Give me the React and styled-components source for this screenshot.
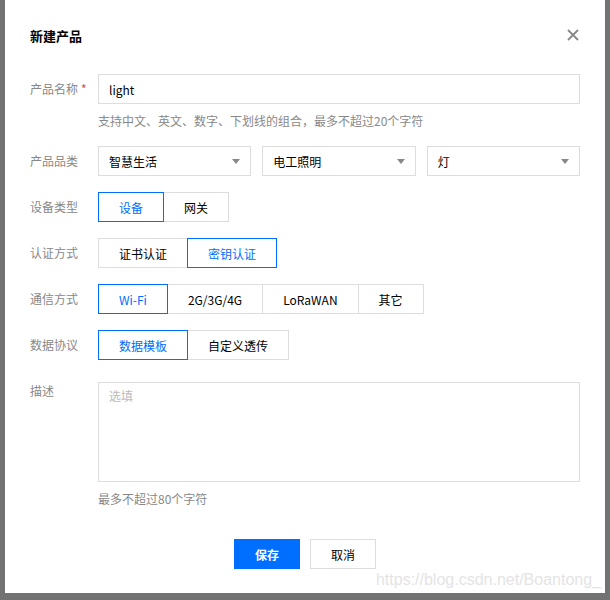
import { useState } from "react";
import styled, { createGlobalStyle } from "styled-components";

const GlobalStyle = createGlobalStyle`
  body {
    margin: 0;
    font-family: "Noto Sans CJK SC", "Liberation Sans", sans-serif;
  }
`;

const SegmentGroup = ({ options, value, onChange }) => (
  <Segments>
    {options.map((opt) => (
      <SegmentButton
        key={opt}
        $active={opt === value}
        onClick={() => onChange(opt)}
      >
        {opt}
      </SegmentButton>
    ))}
  </Segments>
);

const Select = ({ value }) => (
  <SelectBox>
    <span>{value}</span>
    <svg width="8" height="5" viewBox="0 0 8 5">
      <path d="M0 0 L8 0 L4 5 Z" fill="#888" />
    </svg>
  </SelectBox>
);

const App = () => {
  const [deviceType, setDeviceType] = useState("设备");
  const [auth, setAuth] = useState("密钥认证");
  const [network, setNetwork] = useState("Wi-Fi");
  const [protocol, setProtocol] = useState("数据模板");

  return (
    <>
      <GlobalStyle />
      <Backdrop>
        <Modal>
          <Header>
            <Title>新建产品</Title>
            <CloseButton>
              <svg width="12" height="12" viewBox="0 0 12 12">
                <path
                  d="M1 1 L11 11 M11 1 L1 11"
                  stroke="#888"
                  strokeWidth="1.8"
                />
              </svg>
            </CloseButton>
          </Header>

          <FormRow>
            <Label>
              产品名称<Required>*</Required>
            </Label>
            <div>
              <TextInput defaultValue="light" />
              <Help>支持中文、英文、数字、下划线的组合，最多不超过20个字符</Help>
            </div>
          </FormRow>

          <FormRow>
            <Label>产品品类</Label>
            <SelectRow>
              <Select value="智慧生活" />
              <Select value="电工照明" />
              <Select value="灯" />
            </SelectRow>
          </FormRow>

          <FormRow>
            <Label>设备类型</Label>
            <SegmentGroup
              options={["设备", "网关"]}
              value={deviceType}
              onChange={setDeviceType}
            />
          </FormRow>

          <FormRow>
            <Label>认证方式</Label>
            <SegmentGroup
              options={["证书认证", "密钥认证"]}
              value={auth}
              onChange={setAuth}
            />
          </FormRow>

          <FormRow>
            <Label>通信方式</Label>
            <SegmentGroup
              options={["Wi-Fi", "2G/3G/4G", "LoRaWAN", "其它"]}
              value={network}
              onChange={setNetwork}
            />
          </FormRow>

          <FormRow>
            <Label>数据协议</Label>
            <SegmentGroup
              options={["数据模板", "自定义透传"]}
              value={protocol}
              onChange={setProtocol}
            />
          </FormRow>

          <FormRow $top={22}>
            <Label $lineHeight={18}>描述</Label>
            <div>
              <TextArea placeholder="选填" />
              <Help>最多不超过80个字符</Help>
            </div>
          </FormRow>

          <Footer>
            <PrimaryButton>保存</PrimaryButton>
            <DefaultButton>取消</DefaultButton>
          </Footer>

          <Watermark>https://blog.csdn.net/Boantong_</Watermark>
        </Modal>
      </Backdrop>
    </>
  );
};

const Backdrop = styled.div`
  width: 610px;
  height: 600px;
  padding: 0 5px 7px;
  box-sizing: border-box;
  background-color: #727272;
`;

const Modal = styled.div`
  position: relative;
  height: 593px;
  background-color: #fff;
  padding: 26px 25px 0 25px;
  box-sizing: border-box;
  font-size: 12px;
  color: #000;
`;

const Header = styled.div`
  display: flex;
  justify-content: space-between;
  align-items: center;
  height: 18px;
  margin-bottom: 30px;
`;

const Title = styled.h3`
  margin: 0;
  font-size: 13px;
  font-weight: 700;
  color: #000;
`;

const CloseButton = styled.button`
  display: flex;
  align-items: center;
  border: none;
  background: none;
  padding: 0;
  margin-right: 1px;
  cursor: pointer;
`;

const FormRow = styled.div`
  display: grid;
  grid-template-columns: 68px 1fr;
  align-items: start;
  margin-top: ${(p) => p.$top ?? 16}px;

  &:first-of-type {
    margin-top: 0;
  }
`;

const Label = styled.label`
  line-height: ${(p) => p.$lineHeight ?? 30}px;
  color: #888;
  white-space: nowrap;
`;

const Required = styled.span`
  color: #e54545;
  margin-left: 3px;
`;

const TextInput = styled.input`
  display: block;
  width: 100%;
  height: 30px;
  box-sizing: border-box;
  border: 1px solid #ddd;
  padding: 0 10px;
  font-family: inherit;
  font-size: 12px;
  color: #000;
  outline: none;
`;

const Help = styled.div`
  margin-top: 8px;
  line-height: 18px;
  color: #888;
`;

const SelectRow = styled.div`
  display: grid;
  grid-template-columns: repeat(3, 1fr);
  gap: 11px;
`;

const SelectBox = styled.div`
  display: flex;
  justify-content: space-between;
  align-items: center;
  height: 30px;
  box-sizing: border-box;
  border: 1px solid #ddd;
  padding: 0 10px 0 10px;
  color: #000;
  cursor: pointer;
`;

const Segments = styled.div`
  display: flex;
`;

const SegmentButton = styled.button`
  position: relative;
  z-index: ${(p) => (p.$active ? 1 : 0)};
  height: 30px;
  padding: 0 20px;
  margin-left: -1px;
  border: 1px solid ${(p) => (p.$active ? "#006eff" : "#ddd")};
  background: #fff;
  color: ${(p) => (p.$active ? "#006eff" : "#000")};
  font-family: inherit;
  font-size: 12px;
  cursor: pointer;

  &:first-child {
    margin-left: 0;
  }
`;

const TextArea = styled.textarea`
  display: block;
  width: 100%;
  height: 100px;
  box-sizing: border-box;
  border: 1px solid #ddd;
  padding: 4px 10px;
  resize: none;
  font-family: inherit;
  font-size: 12px;
  outline: none;

  &::placeholder {
    color: #bbb;
  }
`;

const Footer = styled.div`
  display: flex;
  justify-content: center;
  gap: 10px;
  margin-top: 31px;
`;

const BaseButton = styled.button`
  width: 66px;
  height: 30px;
  font-family: inherit;
  font-size: 12px;
  cursor: pointer;
`;

const PrimaryButton = styled(BaseButton)`
  border: 1px solid #006eff;
  background-color: #006eff;
  color: #fff;
  font-weight: 700;
`;

const DefaultButton = styled(BaseButton)`
  border: 1px solid #ddd;
  background-color: #fff;
  color: #000;
`;

const Watermark = styled.div`
  position: absolute;
  right: 4px;
  bottom: 4px;
  font-family: "Liberation Sans", sans-serif;
  font-size: 16px;
  color: #e4e4e4;
  pointer-events: none;
`;

export default App;
